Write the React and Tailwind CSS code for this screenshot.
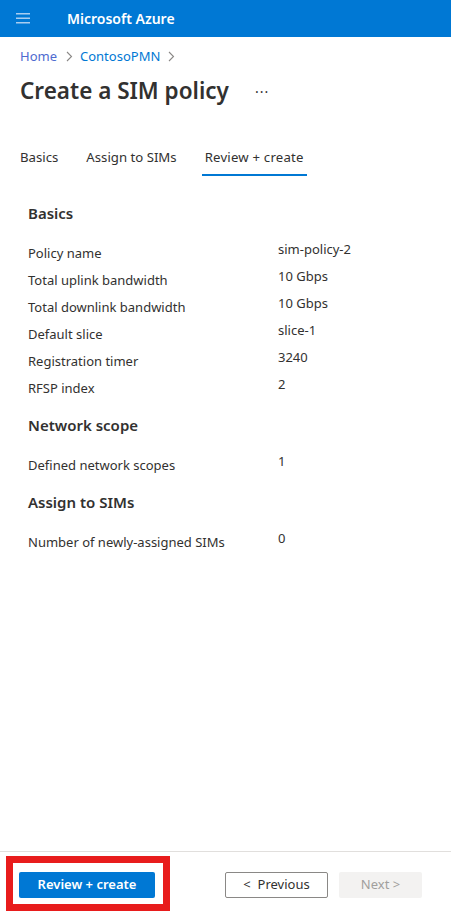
import React from 'react';

const basics = [
  ['Policy name', 'sim-policy-2'],
  ['Total uplink bandwidth', '10 Gbps'],
  ['Total downlink bandwidth', '10 Gbps'],
  ['Default slice', 'slice-1'],
  ['Registration timer', '3240'],
  ['RFSP index', '2'],
];

function Row({ label, value }) {
  return (
    <div className="grid grid-cols-[250px_1fr] h-[27px]">
      <div className="pt-[6px] leading-[18px]">{label}</div>
      <div className="pt-[2px] leading-[18px]">{value}</div>
    </div>
  );
}

function Section({ title, children }) {
  return (
    <div>
      <h3 className="text-[15px] font-semibold leading-[20px] text-[#323130]">{title}</h3>
      <div className="mt-[15px]">{children}</div>
    </div>
  );
}

function Chevron() {
  return (
    <svg width="7" height="11" viewBox="0 0 7 11" className="mt-[1px]">
      <path d="M1 1 L5.5 5.5 L1 10" fill="none" stroke="#8a8886" strokeWidth="1.1" />
    </svg>
  );
}

export default function App() {
  return (
    <div className="relative min-h-screen flex flex-col bg-white text-[#323130] text-[13px]" style={{ fontFamily: '"Segoe UI", "Noto Sans", sans-serif' }}>
      {/* top bar */}
      <header className="h-[37px] bg-[#0078d4] flex items-center">
        <div className="w-[67px] pl-4 flex">
          <svg width="15" height="11" viewBox="0 0 15 11">
            <rect x="0" y="0" width="14" height="1.5" fill="#a9cdf0" />
            <rect x="0" y="4.5" width="14" height="1.5" fill="#a9cdf0" />
            <rect x="0" y="9" width="14" height="1.5" fill="#a9cdf0" />
          </svg>
        </div>
        <span className="text-white font-semibold text-[14px]">Microsoft Azure</span>
      </header>

      <div className="px-5">
        {/* breadcrumb */}
        <nav className="mt-[10px] flex items-center text-[13px] leading-[18px]">
          <a className="text-[#4f6bd0]">Home</a>
          <span className="ml-[9px] mr-[7px] flex"><Chevron /></span>
          <a className="text-[#0078d4]">ContosoPMN</a>
          <span className="ml-[8px] flex"><Chevron /></span>
        </nav>

        <div className="mt-[11px] flex items-center">
          <h1 className="text-[22.5px] font-semibold leading-[30px] text-[#323130]">Create a SIM policy</h1>
          <span className="ml-[26px] text-[#323130] text-[14px] tracking-[1px]">···</span>
        </div>

        {/* tabs */}
        <div className="mt-[36px] flex text-[13.2px] text-[#323130]">
          <div className="pr-[28px] pt-[6px] pb-[8px]">Basics</div>
          <div className="pr-[25px] pt-[6px] pb-[8px]">Assign to SIMs</div>
          <div className="px-[3px] pt-[6px] pb-[6px] border-b-2 border-[#0078d4] tracking-[0.2px]">Review + create</div>
        </div>

        <div className="pl-2 mt-[27px] flex flex-col gap-[15px]">
          <Section title="Basics">
            {basics.map(([l, v]) => <Row key={l} label={l} value={v} />)}
          </Section>
          <Section title="Network scope">
            <Row label="Defined network scopes" value="1" />
          </Section>
          <Section title="Assign to SIMs">
            <Row label="Number of newly-assigned SIMs" value="0" />
          </Section>
        </div>
      </div>

      {/* footer */}
      <footer className="mt-auto border-t border-[#e1dfdd] h-[67px] flex items-start pt-[20px] px-[19px]">
        <button className="w-[136px] h-[26px] bg-[#0078d4] text-white font-semibold rounded-[2px] text-[13px]">Review + create</button>
        <button className="ml-[70px] w-[103px] h-[26px] border border-[#8a8886] rounded-[2px] text-[#323130] text-[13px]">&lt;&nbsp; Previous</button>
        <button className="ml-[11px] w-[83px] h-[26px] bg-[#f3f2f1] rounded-[2px] text-[#a19f9d] text-[13px]">Next &gt;</button>
      </footer>

      {/* annotation highlight */}
      <div className="absolute left-[6px] top-[856px] w-[164px] h-[55px] border-[7px] border-[#e81c1c] pointer-events-none" />
    </div>
  );
}
